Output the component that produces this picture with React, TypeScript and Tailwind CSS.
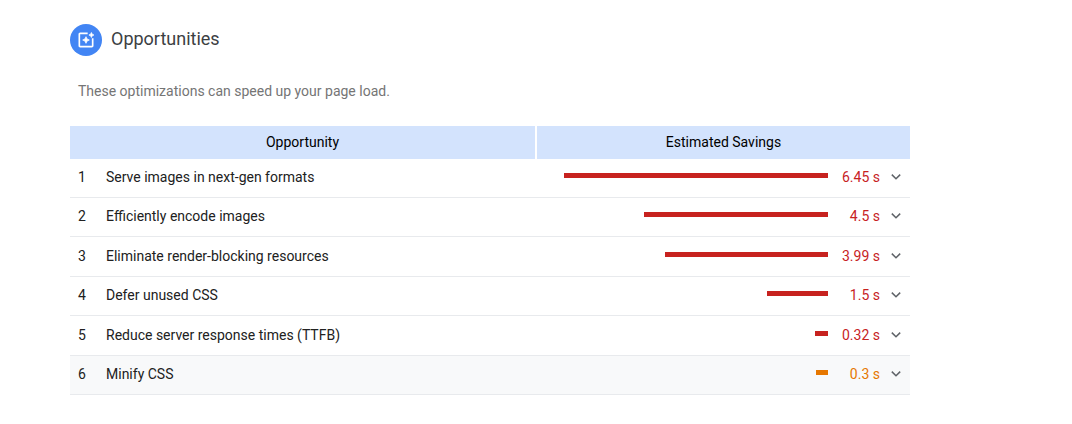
import { useState } from 'react';
import clsx from 'clsx';

type Opportunity = {
  title: string;
  seconds: number;
  severity: 'high' | 'medium';
};

const opportunities: Opportunity[] = [
  { title: 'Serve images in next-gen formats', seconds: 6.45, severity: 'high' },
  { title: 'Efficiently encode images', seconds: 4.5, severity: 'high' },
  { title: 'Eliminate render-blocking resources', seconds: 3.99, severity: 'high' },
  { title: 'Defer unused CSS', seconds: 1.5, severity: 'high' },
  { title: 'Reduce server response times (TTFB)', seconds: 0.32, severity: 'high' },
  { title: 'Minify CSS', seconds: 0.3, severity: 'medium' },
];

const maxSeconds = Math.max(...opportunities.map((o) => o.seconds));

function OptimizeIcon() {
  return (
    <svg className="size-5" viewBox="0 0 24 24" fill="currentColor" aria-hidden="true">
      <path d="M19 10v9H5V5h9V3H5c-1.1 0-2 .9-2 2v14c0 1.1.9 2 2 2h14c1.1 0 2-.9 2-2v-9z" />
      <path
        stroke="currentColor"
        strokeWidth="0.9"
        d="M18.5 9l.94-2.06L21.5 6l-2.06-.94L18.5 3l-.94 2.06L15.5 6l2.06.94zM13.25 10.75L12 8l-1.25 2.75L8 12l2.75 1.25L12 16l1.25-2.75L16 12z"
      />
    </svg>
  );
}

function ChevronIcon() {
  return (
    <svg className="size-[18px]" viewBox="0 0 24 24" fill="none" aria-hidden="true">
      <path d="M6.4 8.8L12 14.4l5.6-5.6" stroke="currentColor" strokeWidth="2" />
    </svg>
  );
}

type RowProps = {
  index: number;
  opportunity: Opportunity;
  active: boolean;
  onSelect: () => void;
};

function OpportunityRow({ index, opportunity, active, onSelect }: RowProps) {
  const { title, seconds, severity } = opportunity;
  const high = severity === 'high';

  return (
    <tr
      className={clsx(
        'h-[39px] not-first:odd:h-10 [&>td]:border-b [&>td]:border-[#e8eaed]',
        active && 'bg-[#f8f9fa]'
      )}
    >
      <td className="pb-0.5 pl-2 text-[#212121]">{index + 1}</td>
      <td className="pb-0.5 text-[#212121]">{title}</td>
      <td className="pb-[5px] pl-[27px]">
        <div
          className={clsx('ml-auto h-[5px]', high ? 'bg-[#c7221f]' : 'bg-[#e67700]')}
          style={{ width: `${(seconds / maxSeconds) * 100}%` }}
        />
      </td>
      <td className={clsx('pb-0.5 text-right', high ? 'text-[#c7221f]' : 'text-[#e67700]')}>
        {seconds} s
      </td>
      <td className="pb-0.5">
        <button
          type="button"
          aria-label={`Show details for ${title}`}
          onClick={onSelect}
          className="ml-[7px] block cursor-pointer text-[#5f6368]"
        >
          <ChevronIcon />
        </button>
      </td>
    </tr>
  );
}

export default function App() {
  const [active, setActive] = useState(5);

  return (
    <main className="bg-white py-6 pl-[70px] font-[Roboto,sans-serif] text-sm leading-5">
      <section className="max-w-[840px]">
        <header className="flex items-center gap-[9px]">
          <div className="flex size-8 items-center justify-center rounded-full bg-[#4285f4] text-white">
            <OptimizeIcon />
          </div>
          <h2 className="pb-0.5 text-lg leading-7 text-[#3c4043]">Opportunities</h2>
        </header>

        <p className="mt-[25px] pl-2 text-[#757575]">
          These optimizations can speed up your page load.
        </p>

        <table className="mt-[25px] w-full table-fixed border-separate border-spacing-0">
          <colgroup>
            <col className="w-9" />
            <col />
            <col className="w-[291px]" />
            <col className="w-[52px]" />
            <col className="w-[30px]" />
          </colgroup>
          <thead>
            <tr className="h-[33px] bg-[#d3e3fd] text-black">
              <th scope="col" colSpan={2} className="border-r-2 border-white pb-0.5 font-normal">
                Opportunity
              </th>
              <th scope="col" colSpan={3} className="pb-0.5 font-normal">
                Estimated Savings
              </th>
            </tr>
          </thead>
          <tbody>
            {opportunities.map((opportunity, i) => (
              <OpportunityRow
                key={opportunity.title}
                index={i}
                opportunity={opportunity}
                active={active === i}
                onSelect={() => setActive(i)}
              />
            ))}
          </tbody>
        </table>
      </section>
    </main>
  );
}
